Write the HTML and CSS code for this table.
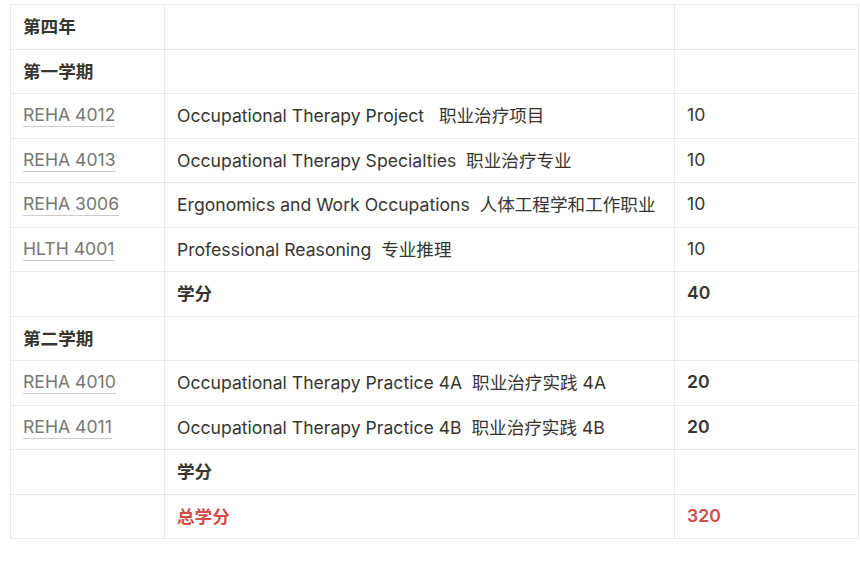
FILE: index.html
```html
<!DOCTYPE html>
<html lang="zh">
<head>
  <meta charset="UTF-8" />
  <meta name="viewport" content="width=device-width, initial-scale=1.0" />
  <title>第四年课程</title>
  <link rel="stylesheet" href="styles.css">
</head>
<body>
  <table class="course-table">
    <colgroup>
      <col class="col-code">
      <col class="col-name">
      <col class="col-credit">
    </colgroup>
    <tbody>
      <tr>
        <td class="strong">第四年</td>
        <td></td>
        <td></td>
      </tr>
      <tr>
        <td class="strong">第一学期</td>
        <td></td>
        <td></td>
      </tr>
      <tr>
        <td><span class="code">REHA 4012</span></td>
        <td>Occupational Therapy Project &nbsp; 职业治疗项目</td>
        <td>10</td>
      </tr>
      <tr>
        <td><span class="code">REHA 4013</span></td>
        <td>Occupational Therapy Specialties&nbsp; 职业治疗专业</td>
        <td>10</td>
      </tr>
      <tr>
        <td><span class="code">REHA 3006</span></td>
        <td>Ergonomics and Work Occupations&nbsp; 人体工程学和工作职业</td>
        <td>10</td>
      </tr>
      <tr>
        <td><span class="code">HLTH 4001</span></td>
        <td>Professional Reasoning&nbsp; 专业推理</td>
        <td>10</td>
      </tr>
      <tr>
        <td></td>
        <td class="strong">学分</td>
        <td class="strong">40</td>
      </tr>
      <tr>
        <td class="strong">第二学期</td>
        <td></td>
        <td></td>
      </tr>
      <tr>
        <td><span class="code">REHA 4010</span></td>
        <td>Occupational Therapy Practice 4A&nbsp; 职业治疗实践 4A</td>
        <td class="strong">20</td>
      </tr>
      <tr>
        <td><span class="code">REHA 4011</span></td>
        <td>Occupational Therapy Practice 4B&nbsp; 职业治疗实践 4B</td>
        <td class="strong">20</td>
      </tr>
      <tr>
        <td></td>
        <td class="strong">学分</td>
        <td></td>
      </tr>
      <tr>
        <td></td>
        <td class="strong red">总学分</td>
        <td class="strong red">320</td>
      </tr>
    </tbody>
  </table>
</body>
</html>
```

FILE: styles.css
```css
:root {
  --text: #37352f;
  --muted: #787774;
  --line: #e9e9e7;
  --red: #d44c47;
}

body {
  font-family: Inter, "Noto Sans CJK SC", sans-serif;
  color: var(--text);
  background: white;
  margin: 0;
  padding: 4px 2px 0 10px;
}

.course-table {
  width: 849px;
  border-collapse: collapse;
  table-layout: fixed;
  font-size: 17.6px;
}

.col-code {
  width: 154px;
}

.col-name {
  width: 510px;
}

.course-table td {
  height: 44.5px;
  box-sizing: border-box;
  padding: 0 12px 2px;
  border: 1px solid var(--line);
  white-space: nowrap;
  vertical-align: middle;
}

.strong {
  font-weight: 600;
}

.red {
  color: var(--red);
}

.code {
  color: var(--muted);
  border-bottom: 1px solid rgba(55, 53, 47, 0.25);
  padding-bottom: 1px;
}
```
